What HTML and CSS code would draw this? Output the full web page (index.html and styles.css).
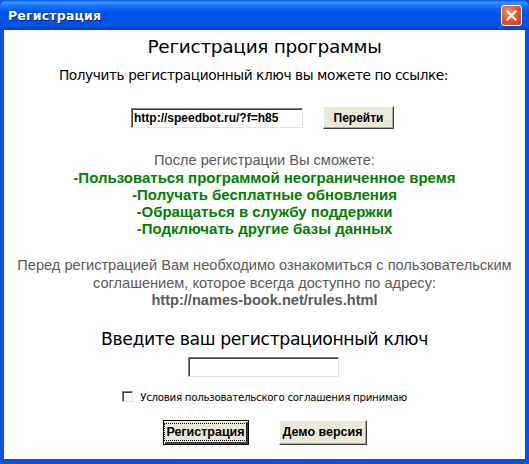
FILE: index.html
```html
<!DOCTYPE html>
<html lang="ru">
<head>
    <meta charset="UTF-8">
    <title>Регистрация</title>
    <link rel="stylesheet" href="styles.css">
</head>
<body>

    <div class="window">
        <div class="titlebar">
            <span class="title">Регистрация</span>
            <button class="close-btn">
                <svg width="11" height="11" viewBox="0 0 11 11">
                    <path d="M1.5 1.5 L9.5 9.5 M9.5 1.5 L1.5 9.5" stroke="#fff" stroke-width="2.2" stroke-linecap="square"/>
                </svg>
            </button>
        </div>

        <div class="client">
            <h1 class="heading">Регистрация программы</h1>
            <p class="lead">Получить регистрационный ключ вы можете по ссылке:</p>

            <div class="link-row">
                <input class="url-input" type="text" value="http://speedbot.ru/?f=h85">
                <button class="xp-btn go-btn">Перейти</button>
            </div>

            <div class="benefits">
                <p class="gray">После регистрации Вы сможете:</p>
                <p class="green">-Пользоваться программой неограниченное время</p>
                <p class="green">-Получать бесплатные обновления</p>
                <p class="green">-Обращаться в службу поддержки</p>
                <p class="green">-Подключать другие базы данных</p>
            </div>

            <div class="rules">
                <p class="gray">Перед регистрацией Вам необходимо ознакомиться с пользовательским</p>
                <p class="gray">соглашением, которое всегда доступно по адресу:</p>
                <p class="gray bold">http://names-book.net/rules.html</p>
            </div>

            <h2 class="key-title">Введите ваш регистрационный ключ</h2>
            <input class="key-input" type="text">

            <label class="agree">
                <span class="checkbox"></span>
                Условия пользовательского соглашения принимаю
            </label>

            <div class="actions">
                <button class="xp-btn reg-btn"><span class="focus">Регистрация</span></button>
                <button class="xp-btn demo-btn">Демо версия</button>
            </div>
        </div>
    </div>

</body>
</html>
```

FILE: styles.css
```css
html, body {
    margin: 0;
    padding: 0;
}

body {
    width: 529px;
    height: 464px;
    overflow: hidden;
    font-family: "Liberation Sans", Arial, sans-serif;
}

.window {
    width: 529px;
    height: 464px;
    box-sizing: border-box;
    display: flex;
    flex-direction: column;
    background: #0a51e0;
}

.titlebar {
    height: 30px;
    flex: none;
    display: flex;
    align-items: center;
    justify-content: space-between;
    padding: 0 7px 0 8px;
    background: linear-gradient(to bottom, #0058ee 0%, #3a93ff 8%, #1f7cfc 16%, #0055ea 40%, #0054e4 70%, #0050db 90%, #003dd0 100%);
    border-radius: 7px 7px 0 0;
}

.title {
    color: white;
    font-family: "DejaVu Sans", sans-serif;
    font-weight: bold;
    font-size: 12.5px;
    letter-spacing: 0.2px;
    text-shadow: 1px 1px 0 #0a1f8a;
    padding-top: 1px;
}

.close-btn {
    width: 21px;
    height: 21px;
    padding: 0;
    border: 1px solid #fff;
    border-radius: 3px;
    background: radial-gradient(circle at 35% 30%, #f0997a 0%, #e2582f 45%, #c8401c 100%);
    display: flex;
    align-items: center;
    justify-content: center;
    margin-top: 1px;
}

.client {
    flex: 1;
    margin: 0 4px 5px 4px;
    background: white;
    display: flex;
    flex-direction: column;
    align-items: center;
}

.heading {
    margin: 6px 0 0 0;
    font-family: "DejaVu Sans", sans-serif;
    font-weight: normal;
    font-size: 18.5px;
    letter-spacing: -0.3px;
    color: black;
}

.lead {
    margin: 10px 22px 0 0;
    font-family: "DejaVu Sans", sans-serif;
    font-size: 13.7px;
    letter-spacing: -0.4px;
    color: black;
}

.link-row {
    display: flex;
    align-items: center;
    gap: 20px;
    margin-top: 23px;
    margin-right: 4px;
}

.url-input {
    width: 172px;
    height: 20px;
    box-sizing: border-box;
    padding: 0 2px;
    border: 1px solid;
    border-color: #7f7f7f #e8e4d8 #e8e4d8 #7f7f7f;
    box-shadow: inset 1px 1px 0 #404040;
    font-family: "Liberation Sans", Arial, sans-serif;
    font-weight: bold;
    font-size: 12px;
    color: black;
}

.xp-btn {
    background: #ece9d8;
    border: 1px solid;
    border-color: #fff #404040 #404040 #fff;
    box-shadow: inset -1px -1px 0 #aca899;
    font-family: "Liberation Sans", Arial, sans-serif;
    font-weight: bold;
    font-size: 12px;
    color: black;
    padding: 0;
}

.go-btn {
    width: 71px;
    height: 23px;
}

.benefits {
    margin-top: 23px;
    text-align: center;
}

.benefits p {
    margin: 0;
    line-height: 17px;
}

.rules p {
    margin: 0;
    line-height: 17.5px;
}

.gray {
    color: #5a5a5a;
    font-size: 14.6px;
}

.green {
    color: #008000;
    font-weight: bold;
    font-size: 15px;
}

.bold {
    font-weight: bold;
}

.rules {
    margin-top: 20px;
    text-align: center;
}

.key-title {
    margin: 19px 0 0 0;
    font-family: "DejaVu Sans", sans-serif;
    font-weight: normal;
    font-size: 17.3px;
    letter-spacing: -0.4px;
    color: black;
}

.key-input {
    width: 151px;
    height: 20px;
    box-sizing: border-box;
    margin-top: 8px;
    margin-right: 3px;
    border: 1px solid;
    border-color: #7f7f7f #e8e4d8 #e8e4d8 #7f7f7f;
    box-shadow: inset 1px 1px 0 #404040;
}

.agree {
    display: flex;
    align-items: center;
    gap: 7px;
    margin-top: 14px;
    font-family: "DejaVu Sans", sans-serif;
    font-size: 10.3px;
    letter-spacing: -0.3px;
    color: black;
}

.checkbox {
    width: 11px;
    height: 11px;
    box-sizing: border-box;
    border: 1px solid;
    border-color: #808080 #e8e4d8 #e8e4d8 #808080;
    box-shadow: inset 1px 1px 0 #404040;
    background: white;
}

.actions {
    display: flex;
    gap: 30px;
    margin-top: 17px;
}

.reg-btn {
    width: 86px;
    height: 25px;
    border: 1px solid black;
    box-shadow: inset 1px 1px 0 #fff, inset -2px -2px 0 #404040;
    font-size: 12.5px;
    display: flex;
    align-items: center;
    justify-content: center;
}

.reg-btn .focus {
    border: 1px dotted black;
    padding: 1px 1px;
}

.demo-btn {
    width: 88px;
    height: 25px;
    font-size: 12.5px;
}
```
